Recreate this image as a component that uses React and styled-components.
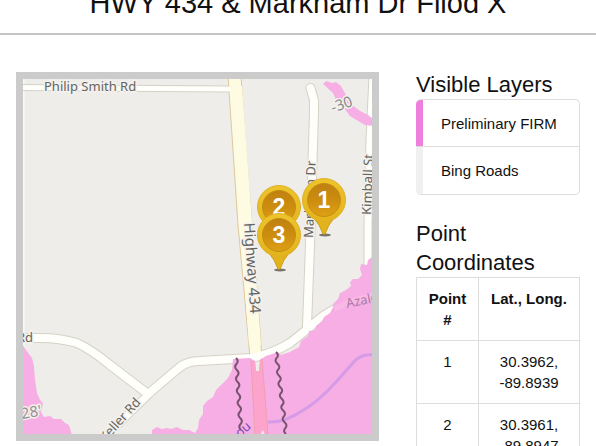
import styled, { createGlobalStyle } from 'styled-components';

const layers = [
  { name: 'Preliminary FIRM', color: '#ee7fdc' },
  { name: 'Bing Roads', color: '#f0f0f0' },
];

const points = [
  { id: 1, lat: '30.3962', long: '-89.8939' },
  { id: 2, lat: '30.3961', long: '-89.8947' },
];

// drawn back to front
const pins = [
  { id: 2, x: 279, y: 207 },
  { id: 3, x: 279, y: 235 },
  { id: 1, x: 324, y: 200 },
];

// squiggly levee line between two points
const wavy = (x1, y1, x2, y2, count) => {
  const dx = (x2 - x1) / count;
  const dy = (y2 - y1) / count;
  let d = `M${x1} ${y1}`;
  for (let i = 0; i < count; i++) {
    const side = i % 2 ? -3 : 3;
    d += ` q${dx / 2 + side} ${dy / 2} ${dx} ${dy}`;
  }
  return d;
};

const highway = 'M228 76 L233 150 L238 225 L244 290 L250 358 L262 358 L257 290 L252 225 L246 150 L241 76 Z';
const philip = 'M16 87.500 L80 88 L232 89';
const markham = 'M310.500 88 L314 100 L314 112 L313 145 L310 245 L307 326';
const kimball = 'M373 76 L370 140 L368 225 L368 270';
const keller = 'M20 338 H40 Q60 338 77 343 Q92 350 110 365 L148 394 L180 367 Q188 361 200 361 L250 358 Q270 355 290 343 L310 327 Q322 315 337 308';
const kellerTail = 'M150 393 L100 442';
const flood =
  'M152 436 L152 430 L157 427 L162 429 L167 428 L171 429 L177 427 L183 430 L189 430 L195 433 L198 428 L199 420 L203 414 L203 406 L207 401 L213 397 L216 390 L221 385 L228 378 L232 370 L233 359 L250 358 L255 361 L256 371 L259 371 L260 360 L266 356 L278 352 L281 355 L290 352 L299 347 L301 341 L308 336 L309 331 L315 330 L316 326 L322 321 L324 317 L330 313 L333 307 L333 304 L338 299 L340 293 L346 290 L351 286 L350 282 L353 279 L358 279 L362 275 L360 269 L361 264 L367 265 L368 260 L374 256 V436 Z';
const floodLeft =
  'M22 344 L26 350 L32 358 L34 366 L35 380 L37 393 L40 400 L43 403 L41 412 L44 417 L50 416 L54 419 L61 419 L65 423 L69 425 L72 435 H22 Z';
const floodTop =
  'M323 84 L326 81 L332 83 L336 82 L341 86 L346 95 L347 100 L352 105 L360 111 L368 115 L374 120 V126 L365 125 L350 116 L344 108 L336 100 L333 93 Z';

const Pin = ({ id, x, y }) => (
  <g transform={`translate(${x} ${y})`}>
    <ellipse cx='1' cy='35' rx='6' ry='1.500' fill='#77736b' />
    <path d='M-10 18 Q-4 25 -1 34 H1 Q4 25 10 18 Z' fill='#e2b31a' stroke='#cf9c14' />
    <circle r='21.500' fill='url(#rim)' stroke='#e0b02a' />
    <circle r='16.500' fill='url(#face)' stroke='#c58d12' />
    <PinText y='8' textAnchor='middle'>
      {id}
    </PinText>
  </g>
);

const FloodMap = () => (
  <MapFrame>
    <MapSvg viewBox='23 79 349 355' preserveAspectRatio='xMidYMid slice' role='img' aria-label='Flood map'>
      <defs>
        <linearGradient id='rim' x1='0' y1='0' x2='0' y2='1'>
          <stop offset='0' stopColor='#edc42a' />
          <stop offset='1' stopColor='#e3b41c' />
        </linearGradient>
        <linearGradient id='face' x1='0' y1='0' x2='0' y2='1'>
          <stop offset='0' stopColor='#c08012' />
          <stop offset='0.500' stopColor='#cc8d0f' />
          <stop offset='1' stopColor='#dea015' />
        </linearGradient>
      </defs>
      <rect x='20' y='76' width='356' height='362' fill='#eeedea' />
      <path d='M23.500 79 V434' stroke='#faf9f5' strokeWidth='2' />

      <g fill='none' stroke='#d5d3c6' strokeLinecap='round' strokeLinejoin='round'>
        <path d={philip} strokeWidth='7' />
        <path d={markham} strokeWidth='10' />
        <path d={kimball} strokeWidth='9' />
        <path d={keller} strokeWidth='10' />
        <path d={kellerTail} strokeWidth='9' />
      </g>
      <path d={highway} fill='#fdfbe2' stroke='#e0c79c' />
      <g fill='none' stroke='#fefefa' strokeLinecap='round' strokeLinejoin='round'>
        <path d={philip} strokeWidth='5' />
        <path d={markham} strokeWidth='8' />
        <path d={kimball} strokeWidth='7' />
        <path d={keller} strokeWidth='8' />
        <path d={kellerTail} strokeWidth='7' />
      </g>
      <path d='M230 86 L249 345 L261 345 L242 86 Z' fill='#fdfbe2' />

      <g fill='#f6aee5'>
        <path d={flood} />
        <path d={floodLeft} />
        <path d={floodTop} />
      </g>
      <path d='M334 309 L350 302 L374 295' fill='none' stroke='#f9b8e5' strokeWidth='6' />
      <path d='M251 360 L255 435 H268 L262 358 L260 360 L259 371 L256 371 L255 361 Z' fill='#fda4cc' />
      <path d='M251 361 L255 435 M262 359 L268 435' stroke='#eda0ae' />
      <path d='M260 435 L263 430 L265 435 Z' fill='#fde4f2' />
      <path
        d='M268 422 Q284 423 302 411 Q318 402 336 382 L352 364 Q360 353 374 355'
        fill='none'
        stroke='#d59be6'
        strokeWidth='3'
      />
      <g fill='none' stroke='#78526f' strokeWidth='2'>
        <path d={wavy(236, 358, 241, 430, 12)} />
        <path d={wavy(276, 352, 286, 434, 14)} />
      </g>

      <Label $size={13} x='44' y='91'>
        Philip Smith Rd
      </Label>
      <Label $size={13} transform='translate(17 342)'>
        Rd
      </Label>
      <Label $size={13} transform='translate(105 443) rotate(-48)'>
        Keller Rd
      </Label>
      <Label $size={13} transform='translate(313 238) rotate(-88)'>
        Markham Dr
      </Label>
      <Label $size={13} transform='translate(371 215) rotate(-88)'>
        Kimball St
      </Label>
      <Label $size={15} transform='translate(244 223) rotate(86)'>
        Highway 434
      </Label>
      <Label $size={13} $color='#ad7ba5' $halo='none' transform='translate(347 308) rotate(-12)'>
        Azalea
      </Label>
      <Label $size={15} $color='#8b8989' transform='translate(333 113) rotate(-20)'>
        -30
      </Label>
      <Label $size={15} $color='#96908f' transform='translate(22 419) rotate(-10)'>
        28'
      </Label>
      <Label $size={13} $color='#7d4fb5' $halo='none' transform='translate(240 438) rotate(-42)'>
        ou
      </Label>

      {pins.map((pin) => (
        <Pin key={pin.id} {...pin} />
      ))}
    </MapSvg>
  </MapFrame>
);

const App = () => {
  return (
    <Page>
      <GlobalStyle />
      <Header>
        <Title>HWY 434 &amp; Markham Dr Fllod X</Title>
      </Header>
      <Main>
        <FloodMap />
        <Sidebar>
          <section>
            <Heading>Visible Layers</Heading>
            <LayerList>
              {layers.map((layer) => (
                <Layer key={layer.name} $color={layer.color}>
                  {layer.name}
                </Layer>
              ))}
            </LayerList>
          </section>
          <section>
            <Heading>Point Coordinates</Heading>
            <Table>
              <thead>
                <tr>
                  <th scope='col'>Point #</th>
                  <th scope='col'>Lat., Long.</th>
                </tr>
              </thead>
              <tbody>
                {points.map((point) => (
                  <tr key={point.id}>
                    <td>{point.id}</td>
                    <td>
                      {point.lat}, {point.long}
                    </td>
                  </tr>
                ))}
              </tbody>
            </Table>
          </section>
        </Sidebar>
      </Main>
    </Page>
  );
};

export default App;

const GlobalStyle = createGlobalStyle`
  * {
    box-sizing: border-box;
  }
  body {
    margin: 0;
    background: #fff;
    color: #111;
    font-family: 'Liberation Sans', Arial, sans-serif;
    font-size: 15px;
    line-height: 21px;
  }
`;

const Page = styled.div`
  height: 100vh;
  overflow: hidden;
`;

const Header = styled.header`
  margin-top: -13px;
  padding-bottom: 14px;
  border-bottom: 2px solid #c4c4c4;
`;

const Title = styled.h1`
  margin: 0;
  font-size: 29px;
  font-weight: 400;
  line-height: 32px;
  text-align: center;
  white-space: nowrap;
`;

const Main = styled.main`
  display: grid;
  grid-template-columns: minmax(0, 1fr) 164px;
  align-items: start;
  gap: 37px;
  padding: 35px 16px;
`;

const MapFrame = styled.div`
  margin-top: 2px;
  border: 7px solid #cbcbcb;
`;

const MapSvg = styled.svg`
  display: block;
  width: 100%;
`;

const Label = styled.text`
  font-family: 'Noto Sans', sans-serif;
  font-size: ${(props) => props.$size}px;
  fill: ${(props) => props.$color || '#66645f'};
  stroke: ${(props) => props.$halo || '#f3f2ee'};
  stroke-width: 3px;
  stroke-linejoin: round;
  paint-order: stroke;
`;

const PinText = styled.text`
  font-family: 'Liberation Sans', Arial, sans-serif;
  font-size: 23px;
  font-weight: 700;
  fill: #fff;
`;

const Sidebar = styled.aside`
  display: grid;
  gap: 24px;
`;

const Heading = styled.h2`
  margin: 0;
  font-size: 22px;
  font-weight: 400;
  line-height: 29px;
`;

const LayerList = styled.ul`
  margin: 0;
  padding: 0;
  list-style: none;
  border: 1px solid #ddd;
  border-left: 0;
  border-radius: 5px;
  overflow: hidden;
`;

const Layer = styled.li`
  padding: 13px 18px;
  border-left: 7px solid ${(props) => props.$color};

  & + & {
    box-shadow: 0 -1px #ddd;
  }
`;

const Table = styled.table`
  width: 100%;
  table-layout: fixed;
  border-collapse: collapse;

  th,
  td {
    padding: 10px;
    border: 1px solid #ddd;
    text-align: center;
    vertical-align: top;
  }

  th:first-child {
    width: 62px;
  }
`;
